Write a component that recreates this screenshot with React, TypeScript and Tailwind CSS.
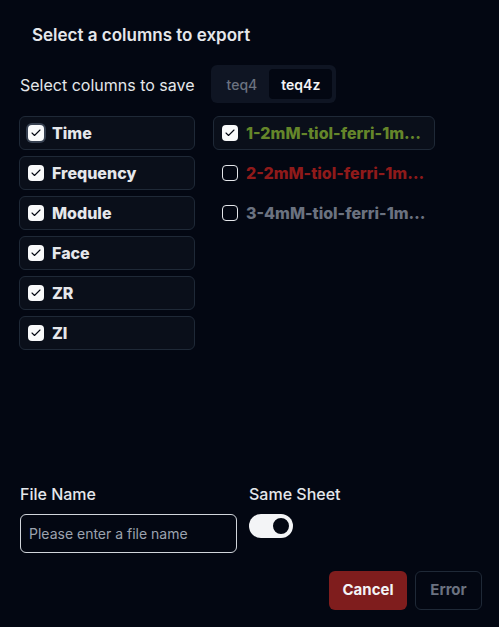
import { useState } from 'react';

const columns = ['Time', 'Frequency', 'Module', 'Face', 'ZR', 'ZI'];

const files = [
  { name: '1-2mM-tiol-ferri-1mM-KCl.txt', color: 'text-[#65862a]', checked: true },
  { name: '2-2mM-tiol-ferri-1mM-KCl.txt', color: 'text-[#8f1a1a]', checked: false },
  { name: '3-4mM-tiol-ferri-1mM-KCl.txt', color: 'text-[#6b7280]', checked: false },
];

function Check({ checked, focused }: { checked: boolean; focused?: boolean }) {
  return (
    <span
      className={`flex h-4 w-4 shrink-0 items-center justify-center rounded-[4px] ${
        checked ? 'bg-[#f9fafb]' : 'border-[1.5px] border-[#e5e7eb]'
      } ${focused ? 'ring-2 ring-[#374151]' : ''}`}
    >
      {checked && (
        <svg viewBox="0 0 24 24" className="h-3 w-3" fill="none" stroke="#030712" strokeWidth={2.2} strokeLinecap="round" strokeLinejoin="round">
          <path d="M20 6 9 17l-5-5" />
        </svg>
      )}
    </span>
  );
}

export default function App() {
  const [tab, setTab] = useState('teq4z');

  return (
    <div className="flex h-[627px] w-[499px] flex-col bg-[#030712] px-5 pb-[17px] font-['Inter',sans-serif] text-[#e5e7eb]">
      <h1 className="ml-3 mt-[24px] text-[17px] font-semibold leading-[22px]">Select a columns to export</h1>

      <div className="mt-[19px] flex items-center gap-4">
        <span className="mt-[2px] text-[16px]">Select columns to save</span>
        <div className="flex h-[38px] items-center rounded-md bg-[#0f1523] p-1">
          {['teq4', 'teq4z'].map((t) => (
            <button
              key={t}
              onClick={() => setTab(t)}
              className={`h-[30px] rounded-[4px] px-3 text-[14px] ${
                tab === t ? 'bg-[#030712] font-semibold text-[#f3f4f6]' : 'font-medium text-[#6b7280]'
              }`}
            >
              {t}
            </button>
          ))}
        </div>
      </div>

      <div className="mt-[13px] flex gap-[18px]">
        <div className="ml-[-1px] flex w-[176px] flex-col gap-[6px]">
          {columns.map((c, i) => (
            <div key={c} className="flex h-[34px] items-center gap-2 rounded-md border border-[#1f2937] bg-[#0a0f1a] pl-[8px]">
              <Check checked focused={i === 0} />
              <span className="text-[16px] font-extrabold text-[#e5e7eb]">{c}</span>
            </div>
          ))}
        </div>

        <div className="flex w-[222px] flex-col gap-[6px]">
          {files.map((f) => (
            <div
              key={f.name}
              className={`flex h-[34px] items-center gap-2 rounded-md border pl-[8px] pr-[7px] ${
                f.checked ? 'border-[#1f2937] bg-[#0a0f1a]' : 'border-transparent'
              }`}
            >
              <Check checked={f.checked} />
              <span className={`truncate text-[16px] font-extrabold ${f.color}`}>{f.name}</span>
            </div>
          ))}
        </div>
      </div>

      <div className="flex-1" />

      <div className="flex gap-3">
        <div className="flex w-[217px] flex-col gap-[10px]">
          <label className="text-[16px] font-medium leading-5">File Name</label>
          <input
            placeholder="Please enter a file name"
            className="h-[39px] rounded-md border border-[#d1d5db] bg-transparent px-2 text-[14px] text-[#e5e7eb] outline-none placeholder:text-[#9ca3af]"
          />
        </div>
        <div className="flex flex-col gap-[10px]">
          <label className="text-[16px] font-medium leading-5">Same Sheet</label>
          <div className="flex h-6 w-11 items-center rounded-full bg-[#f3f4f6] p-[2px]">
            <span className="ml-auto h-5 w-5 rounded-full border-2 border-[#f3f4f6] bg-[#030712]" />
          </div>
        </div>
      </div>

      <div className="mt-[18px] flex justify-end gap-2">
        <button className="h-[39px] w-[78px] rounded-md bg-[#7f1d1d] text-[15px] font-bold text-[#f3f4f6]">Cancel</button>
        <button className="mr-[-3px] h-[39px] w-[67px] rounded-md border border-[#1f2937] text-[15px] font-bold text-[#6b7280]">Error</button>
      </div>
    </div>
  );
}
